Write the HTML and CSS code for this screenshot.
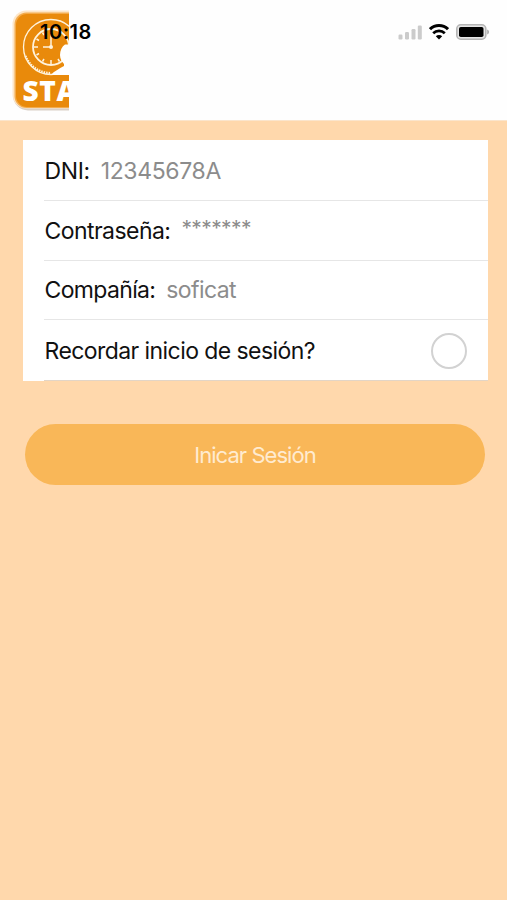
FILE: index.html
```html
<!DOCTYPE html>
<html lang="es">
<head>
    <meta charset="UTF-8">
    <meta name="viewport" content="width=device-width, initial-scale=1.0">
    <title>Inicio de sesión</title>
    <link rel="stylesheet" href="styles.css">
</head>
<body>

    <header class="cabecera">
        <svg class="logo" width="57" height="102" viewBox="0 0 57 102">
            <rect x="1" y="2" width="90" height="98.5" rx="15" fill="#d9cfc5"/>
            <rect x="0.5" y="0.5" width="90" height="98" rx="14" fill="#fde6c8"/>
            <rect x="2.5" y="2.5" width="90" height="95.5" rx="12" fill="#f3ab4c"/>
            <rect x="4" y="4" width="90" height="93" rx="11" fill="#e98a0b"/>
            <!-- Reloj -->
            <circle cx="39" cy="37" r="27.5" fill="none" stroke="#fff3dc" stroke-width="1.3"/>
            <path d="M13.5 46a27 27 0 0 0 25.5 17" fill="none" stroke="#fff3dc" stroke-width="2.2" stroke-dasharray="1.5 1"/>
            <circle cx="39" cy="37" r="18" fill="none" stroke="#fff3dc" stroke-width="1.8"/>
            <path d="M39 20v3M39 50v4M22 37h4M30.5 22.5l1.5 2.5M24.5 29l2.5 1.5M24.5 45l2.5-1.5M30.5 51.5l1.5-2.5M47.5 51.5l-1.5-2.5" stroke="#fff3dc" stroke-width="1.5"/>
            <path d="M39 24v13H31" fill="none" stroke="#fff3dc" stroke-width="1.5"/>
            <circle cx="39" cy="37" r="2" fill="#fff3dc"/>
            <!-- Persona -->
            <path d="M57 34.5h-4c-3 2-5 6-5 10.5 0 4 2 7 4 9v2c-5 3-10 5-13 9h18z" fill="#fff"/>
            <text class="logo-texto" x="10.5" y="91">STA</text>
        </svg>
        <span class="hora">10:18</span>
        <div class="estado">
            <svg width="24" height="16" viewBox="0 0 24 16" fill="#cbcbcb">
                <rect x="0.5" y="10.5" width="4" height="5" rx="1.2"/>
                <rect x="7" y="8" width="4" height="7.5" rx="1.2"/>
                <rect x="13.5" y="5" width="4" height="10.5" rx="1.2"/>
                <rect x="19.8" y="1.5" width="4" height="14" rx="1.2"/>
            </svg>
            <svg width="20" height="16" viewBox="0 0 20 16">
                <path d="M1 5.2a12.8 12.8 0 0 1 18 0" fill="none" stroke="#000" stroke-width="3"/>
                <path d="M4.2 9.2a8.2 8.2 0 0 1 11.6 0" fill="none" stroke="#000" stroke-width="2.7"/>
                <path d="M6.8 12.3a4.6 4.6 0 0 1 6.4 0L10 15.5z" fill="#000"/>
            </svg>
            <svg width="34" height="16" viewBox="0 0 34 16">
                <rect x="0.8" y="0.8" width="29" height="14.4" rx="4" fill="#e6e6e6" stroke="#b5b5b5" stroke-width="1.6"/>
                <rect x="3" y="3" width="24.5" height="10" rx="1.8" fill="#000"/>
                <path d="M31.2 5.5c2.4.7 2.4 4.3 0 5z" fill="#aaa"/>
            </svg>
        </div>
    </header>

    <main>
        <div class="formulario">
            <div class="fila">
                <span class="etiqueta">DNI:</span>
                <span class="valor numero">12345678A</span>
            </div>
            <div class="fila">
                <span class="etiqueta contrasena">Contraseña:</span>
                <span class="valor clave">*******</span>
            </div>
            <div class="fila">
                <span class="etiqueta compania">Compañía:</span>
                <span class="valor">soficat</span>
            </div>
            <label class="fila">
                <span class="etiqueta recordar">Recordar inicio de sesión?</span>
                <input class="casilla" type="checkbox">
            </label>
        </div>

        <button class="boton" type="button">Inicar Sesión</button>
    </main>

</body>
</html>
```
FILE: styles.css
```css
* {
    box-sizing: border-box;
}

body {
    font-family: 'Inter', sans-serif;
    margin: 0;
    min-height: 100vh;
    background-color: #ffd8ac;
    color: #111;
}

.cabecera {
    display: flex;
    align-items: flex-start;
    height: 121px;
    padding: 10px 17px 0 12px;
    background-color: #fefefe;
    border-bottom: 1px solid #fbe5cc;
}

.logo {
    display: block;
}

.logo-texto {
    font-family: 'Open Sans', sans-serif;
    font-size: 28px;
    font-weight: 800;
    letter-spacing: 0.7px;
    fill: #fff;
}

/* La hora queda encima del logo */
.hora {
    position: relative;
    margin-left: -29px;
    margin-top: 10px;
    font-size: 20px;
    line-height: 24px;
    font-weight: 600;
    letter-spacing: 0.5px;
    color: #000;
}

.estado {
    display: flex;
    gap: 7px;
    margin-left: auto;
    margin-top: 14px;
}

.estado svg {
    display: block;
}

.formulario {
    margin: 19px 19px 0 23px;
    padding-left: 21px;
    background-color: #fff;
}

.fila {
    display: flex;
    align-items: center;
    height: 60px;
    padding-right: 21px;
    border-bottom: 1px solid #e6e6e6;
    font-size: 23px;
    letter-spacing: -0.4px;
}

.fila:first-child {
    height: 61px;
    padding-top: 1px;
}

.fila:nth-child(3) {
    height: 59px;
}

.fila:last-child {
    height: 61px;
    border-bottom-color: #e3d5c6;
}

.etiqueta {
    margin-left: 0.5px;
}

.contrasena {
    letter-spacing: -0.55px;
}

.compania {
    letter-spacing: -0.65px;
}

.recordar {
    margin-top: 1px;
    letter-spacing: -0.57px;
}

.valor {
    margin-left: 11px;
    color: #8c8c8c;
    letter-spacing: -0.6px;
}

.numero {
    letter-spacing: -0.35px;
}

.clave {
    margin-top: -4px;
    font-size: 21px;
    letter-spacing: -0.6px;
}

.casilla {
    appearance: none;
    width: 36px;
    height: 36px;
    margin: 2px 0 0 auto;
    border: 2px solid #d2d2d2;
    border-radius: 50%;
    background-color: #fff;
}

.boton {
    display: block;
    width: 460px;
    height: 61px;
    margin: 43px 0 0 25px;
    padding: 1px 0 0;
    border: none;
    border-radius: 31px;
    background-color: #f9b758;
    color: #ffebd0;
    font-family: inherit;
    font-size: 22px;
    letter-spacing: -0.95px;
    cursor: pointer;
}
```
